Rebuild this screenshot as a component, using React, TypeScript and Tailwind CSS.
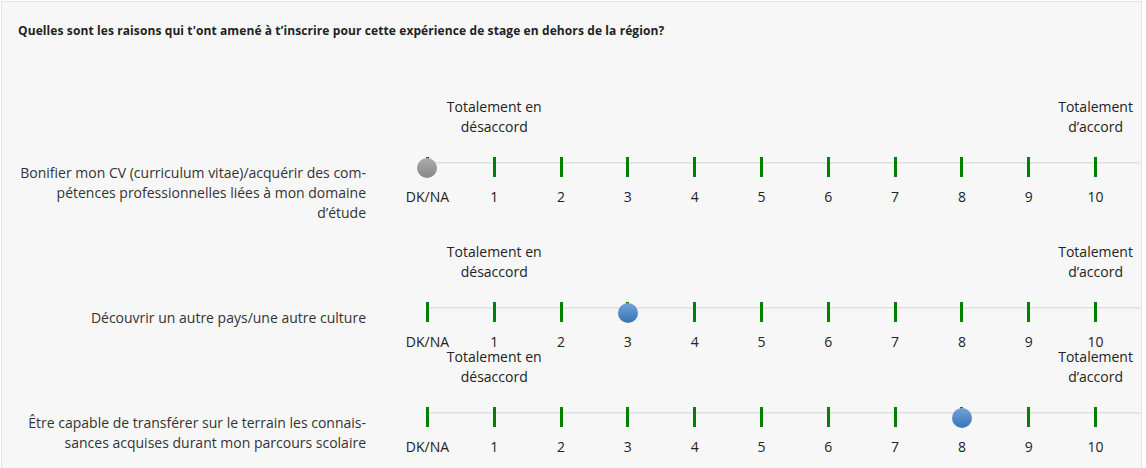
import React from 'react';

type Row = { lines: string[]; value: number; na?: boolean };

const rows: Row[] = [
  {
    lines: [
      'Bonifier mon CV (curriculum vitae)/acquérir des com-',
      'pétences professionnelles liées à mon domaine',
      'd’étude',
    ],
    value: 0,
    na: true,
  },
  { lines: ['Découvrir un autre pays/une autre culture'], value: 3 },
  {
    lines: ['Être capable de transférer sur le terrain les connais-', 'sances acquises durant mon parcours scolaire'],
    value: 8,
  },
];

const points = ['DK/NA', '1', '2', '3', '4', '5', '6', '7', '8', '9', '10'];

function SliderRow({ row }: { row: Row }) {
  return (
    <div className="flex">
      <div className="w-[348px] shrink-0 pt-[66px] pb-[19px] text-right text-[14px] leading-[20px] text-[#333]">
        {row.lines.map((l) => (
          <div key={l}>{l}</div>
        ))}
      </div>
      <div className="ml-[28px] w-[735px] shrink-0">
        <div className="grid h-[40px] grid-cols-11 text-[14px] leading-[20px] text-[#222]">
          <div className="col-start-2 flex flex-col items-center whitespace-nowrap">
            <span>Totalement en</span>
            <span>désaccord</span>
          </div>
          <div className="col-start-11 flex flex-col items-center whitespace-nowrap">
            <span>Totalement</span>
            <span>d’accord</span>
          </div>
        </div>
        <div className="relative mt-[20px] grid h-[20px] grid-cols-11">
          <div className="absolute left-[33px] right-[-11px] top-[5px] h-[1px] bg-[#dedede]" />
          <div className="absolute left-[33px] right-[-11px] top-[6px] h-[1px] bg-[#ececec]" />
          {points.map((p, i) => (
            <div key={p} className="relative flex justify-center">
              <div className="h-[20px] w-[3px] bg-[#008000]" />
              {i === row.value && (
                <div
                  className={
                    row.na
                      ? 'absolute left-1/2 top-[1px] h-[20px] w-[20px] -translate-x-1/2 rounded-full bg-gradient-to-b from-[#ababab] to-[#888]'
                      : 'absolute left-1/2 top-[1px] h-[20px] w-[20px] -translate-x-1/2 rounded-full bg-gradient-to-b from-[#6fa3d8] to-[#3674b3]'
                  }
                />
              )}
            </div>
          ))}
        </div>
        <div className="mt-[10px] grid h-0 grid-cols-11 text-[14px] leading-[20px] text-[#222]">
          {points.map((p) => (
            <div key={p} className="flex justify-center whitespace-nowrap">
              {p}
            </div>
          ))}
        </div>
      </div>
    </div>
  );
}

export default function App() {
  return (
    <div className="min-h-[468px] bg-white font-['Open_Sans',sans-serif]">
      <div className="ml-[1px] mt-[1px] min-h-[467px] w-[1141px] border-l border-r border-t border-[#e3e3e3] bg-[#f7f7f7] pl-[16px]">
        <h1 className="pt-[21px] text-[12px] font-bold leading-[16px] tracking-[0.1px] text-[#222]">
          Quelles sont les raisons qui t'ont amené à t’inscrire pour cette expérience de stage en dehors de la région?
        </h1>
        <div className="mt-[58px]">
          {rows.map((r, i) => (
            <SliderRow key={i} row={r} />
          ))}
        </div>
      </div>
    </div>
  );
}
